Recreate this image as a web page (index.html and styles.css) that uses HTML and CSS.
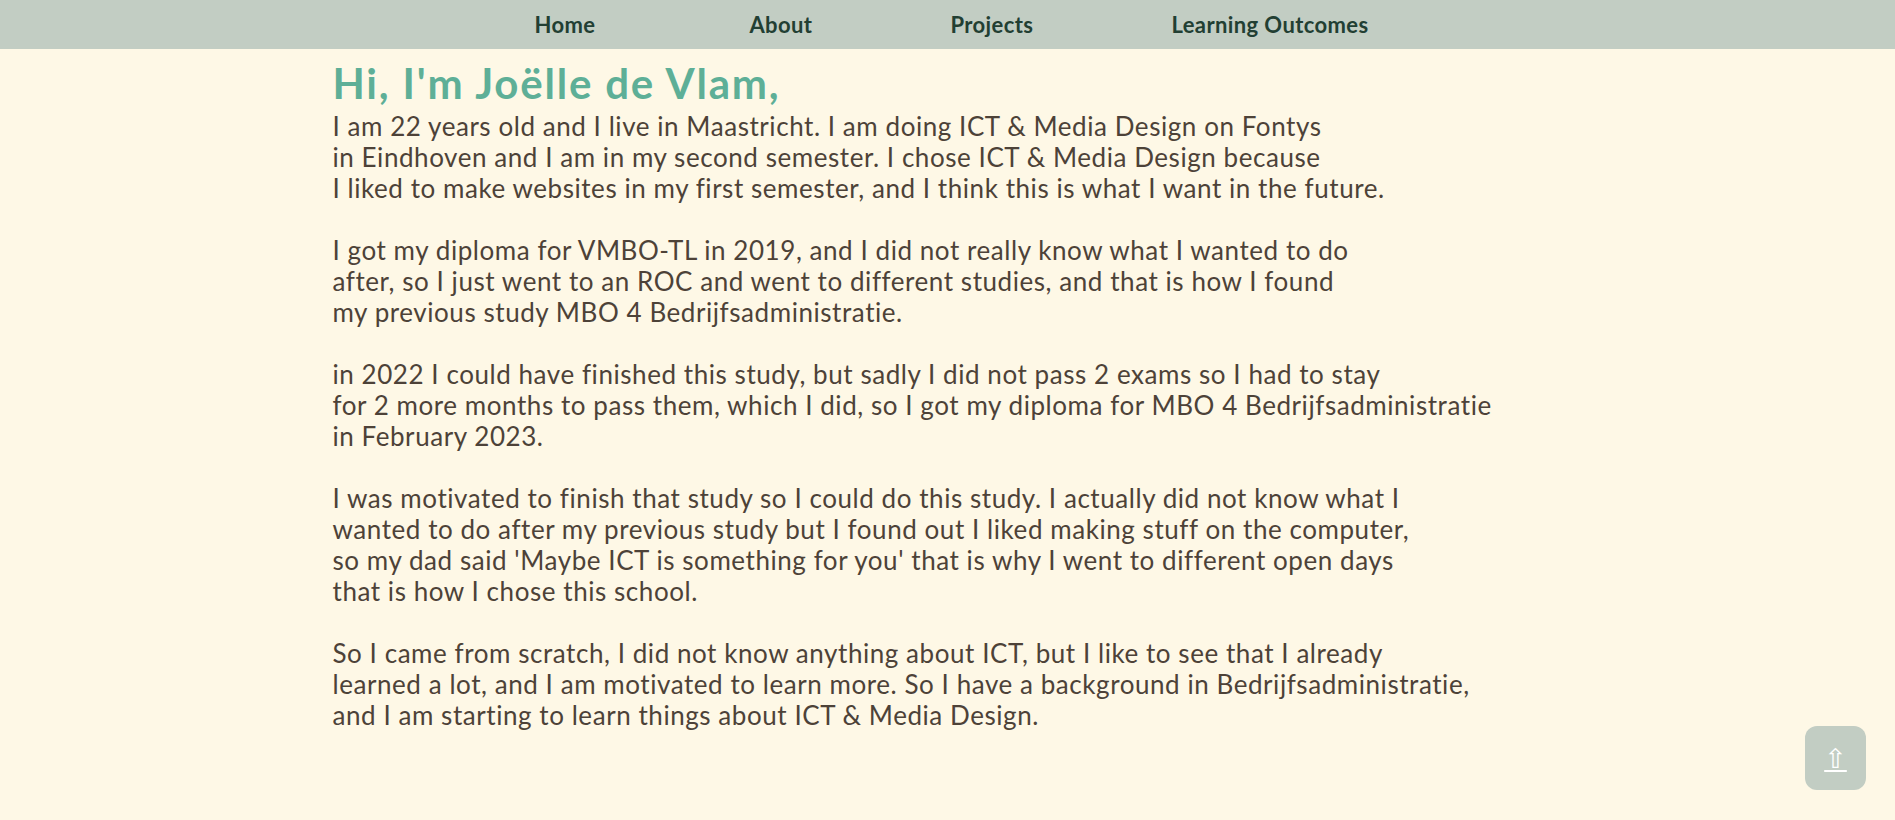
FILE: index.html
```html
<!DOCTYPE html>
<html lang="en">
<head>
<meta charset="utf-8">
<title>About - Joëlle de Vlam</title>
<link rel="stylesheet" href="styles.css">
</head>
<body>
<header class="nav">
  <a class="nav-link nav-home" href="#">Home</a>
  <a class="nav-link" href="#">About</a>
  <a class="nav-link" href="#">Projects</a>
  <a class="nav-link" href="#">Learning Outcomes</a>
</header>
<main class="content">
  <h1 class="title">Hi, I'm Joëlle de Vlam,</h1>
  <p class="text">I am 22 years old and I live in Maastricht. I am doing ICT &amp; Media Design on Fontys<br>in Eindhoven and I am in my second semester. I chose ICT &amp; Media Design because<br>I liked to make websites in my first semester, and I think this is what I want in the future.</p>
  <p class="text">I got my diploma for VMBO-TL in 2019, and I did not really know what I wanted to do<br>after, so I just went to an ROC and went to different studies, and that is how I found<br>my previous study MBO 4 Bedrijfsadministratie.</p>
  <p class="text">in 2022 I could have finished this study, but sadly I did not pass 2 exams so I had to stay<br>for 2 more months to pass them, which I did, so I got my diploma for MBO 4 Bedrijfsadministratie<br>in February 2023.</p>
  <p class="text">I was motivated to finish that study so I could do this study. I actually did not know what I<br>wanted to do after my previous study but I found out I liked making stuff on the computer,<br>so my dad said 'Maybe ICT is something for you' that is why I went to different open days<br>that is how I chose this school.</p>
  <p class="text">So I came from scratch, I did not know anything about ICT, but I like to see that I already<br>learned a lot, and I am motivated to learn more. So I have a background in Bedrijfsadministratie,<br>and I am starting to learn things about ICT &amp; Media Design.</p>
</main>
<a class="to-top" href="#"><span class="to-top-icon">⇧</span></a>
</body>
</html>
```

FILE: styles.css
```css
html, body {
  margin: 0;
  padding: 0;
}

body {
  background: #fef8e6;
  font-family: Lato, "Open Sans", sans-serif;
  color: #4d4238;
}

.nav {
  height: 49px;
  background: #c2cdc3;
  display: flex;
  justify-content: center;
  align-items: center;
  gap: 138px;
  padding-left: 8px;
}

.nav-link {
  color: #223f33;
  text-decoration: none;
  font-weight: 700;
  font-size: 22px;
  letter-spacing: 0.4px;
}

.nav-home {
  margin-right: 16px;
}

.content {
  width: 1230px;
  margin: 0 auto;
  padding-top: 9px;
}

.title {
  margin: 0 0 3px;
  font-size: 42px;
  font-weight: 700;
  letter-spacing: 1.8px;
  color: #5eaf97;
}

.text {
  margin: 0 0 31px;
  font-size: 26px;
  line-height: 31px;
  letter-spacing: 0.56px;
}

.to-top {
  position: fixed;
  right: 29px;
  bottom: 30px;
  width: 61px;
  height: 64px;
  border-radius: 12px;
  background: #c2cdc3;
  display: flex;
  align-items: center;
  justify-content: center;
  color: #ffffff;
  font-size: 27px;
  text-decoration: underline;
}

.to-top-icon {
  color: #ffffff;
  font-family: "DejaVu Sans", sans-serif;
}
```
